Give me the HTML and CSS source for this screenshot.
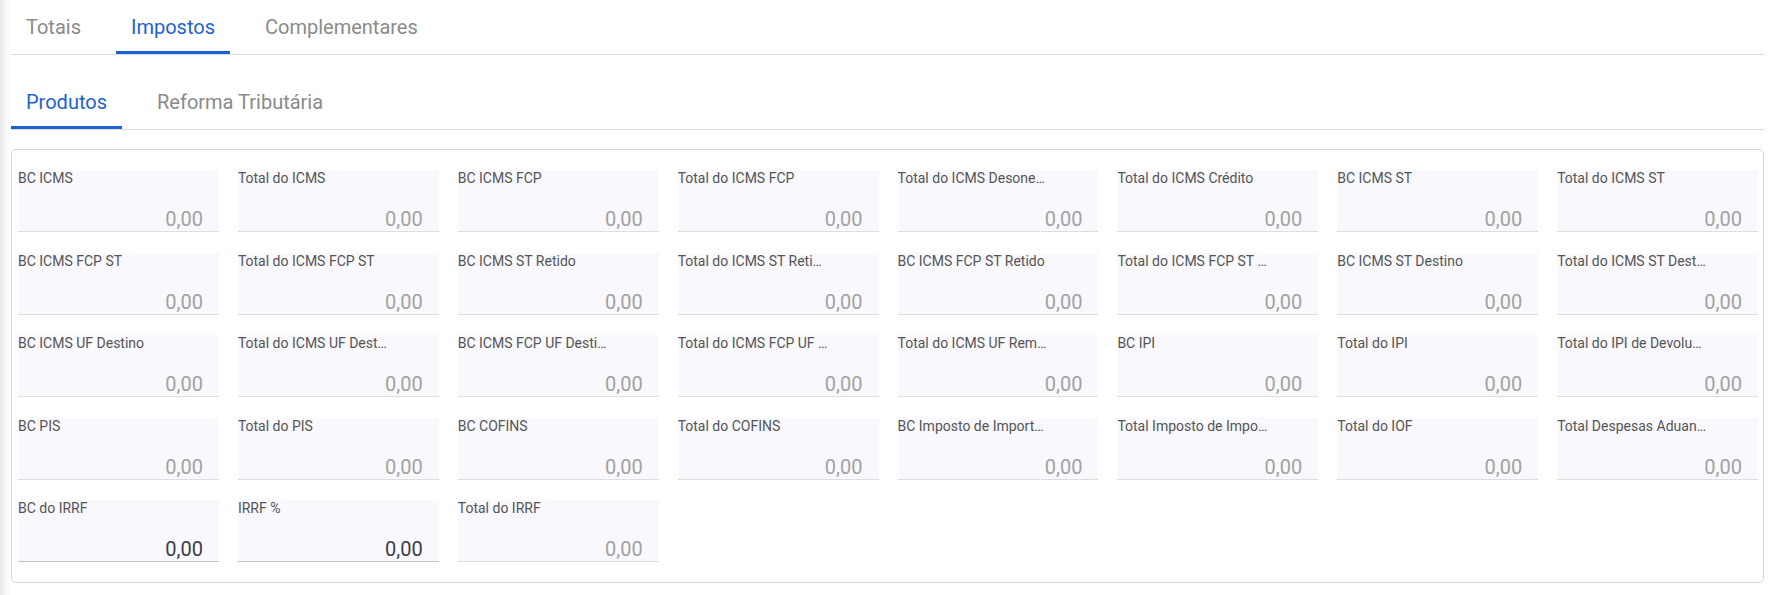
FILE: index.html
```html
<!DOCTYPE html>
<html lang="pt-BR">
<head>
<meta charset="utf-8">
<title>Impostos</title>
<link rel="stylesheet" href="styles.css">
</head>
<body>
<div class="page">
  <nav class="tabs">
    <div class="tab">Totais</div>
    <div class="tab active">Impostos</div>
    <div class="tab">Complementares</div>
  </nav>
  <nav class="tabs sub">
    <div class="tab active">Produtos</div>
    <div class="tab">Reforma Tributária</div>
  </nav>
  <section class="card">
    <div class="grid">
      <div class="field"><div class="label">BC ICMS</div><div class="value">0,00</div></div>
      <div class="field"><div class="label">Total do ICMS</div><div class="value">0,00</div></div>
      <div class="field"><div class="label">BC ICMS FCP</div><div class="value">0,00</div></div>
      <div class="field"><div class="label">Total do ICMS FCP</div><div class="value">0,00</div></div>
      <div class="field"><div class="label">Total do ICMS Desonerado</div><div class="value">0,00</div></div>
      <div class="field"><div class="label">Total do ICMS Crédito</div><div class="value">0,00</div></div>
      <div class="field"><div class="label">BC ICMS ST</div><div class="value">0,00</div></div>
      <div class="field"><div class="label">Total do ICMS ST</div><div class="value">0,00</div></div>

      <div class="field"><div class="label">BC ICMS FCP ST</div><div class="value">0,00</div></div>
      <div class="field"><div class="label">Total do ICMS FCP ST</div><div class="value">0,00</div></div>
      <div class="field"><div class="label">BC ICMS ST Retido</div><div class="value">0,00</div></div>
      <div class="field"><div class="label">Total do ICMS ST Retido</div><div class="value">0,00</div></div>
      <div class="field"><div class="label">BC ICMS FCP ST Retido</div><div class="value">0,00</div></div>
      <div class="field"><div class="label">Total do ICMS FCP ST Retido</div><div class="value">0,00</div></div>
      <div class="field"><div class="label">BC ICMS ST Destino</div><div class="value">0,00</div></div>
      <div class="field"><div class="label">Total do ICMS ST Destino</div><div class="value">0,00</div></div>

      <div class="field"><div class="label">BC ICMS UF Destino</div><div class="value">0,00</div></div>
      <div class="field"><div class="label">Total do ICMS UF Destino</div><div class="value">0,00</div></div>
      <div class="field"><div class="label">BC ICMS FCP UF Destino</div><div class="value">0,00</div></div>
      <div class="field"><div class="label">Total do ICMS FCP UF Destino</div><div class="value">0,00</div></div>
      <div class="field"><div class="label">Total do ICMS UF Remetente</div><div class="value">0,00</div></div>
      <div class="field"><div class="label">BC IPI</div><div class="value">0,00</div></div>
      <div class="field"><div class="label">Total do IPI</div><div class="value">0,00</div></div>
      <div class="field"><div class="label">Total do IPI de Devolução</div><div class="value">0,00</div></div>

      <div class="field"><div class="label">BC PIS</div><div class="value">0,00</div></div>
      <div class="field"><div class="label">Total do PIS</div><div class="value">0,00</div></div>
      <div class="field"><div class="label">BC COFINS</div><div class="value">0,00</div></div>
      <div class="field"><div class="label">Total do COFINS</div><div class="value">0,00</div></div>
      <div class="field"><div class="label">BC Imposto de Importação</div><div class="value">0,00</div></div>
      <div class="field"><div class="label">Total Imposto de Importação</div><div class="value">0,00</div></div>
      <div class="field"><div class="label">Total do IOF</div><div class="value">0,00</div></div>
      <div class="field"><div class="label">Total Despesas Aduaneiras</div><div class="value">0,00</div></div>

      <div class="field editable"><div class="label">BC do IRRF</div><div class="value">0,00</div></div>
      <div class="field editable"><div class="label">IRRF %</div><div class="value">0,00</div></div>
      <div class="field"><div class="label">Total do IRRF</div><div class="value">0,00</div></div>
    </div>
  </section>
</div>
</body>
</html>
```
FILE: styles.css
```css
html, body {
  margin: 0;
  padding: 0;
}
body {
  background: linear-gradient(to right, #e9e9e9 0, #f6f6f6 5px, #ffffff 11px) no-repeat #ffffff;
  min-height: 595px;
  font-family: Roboto, "Liberation Sans", Arial, sans-serif;
}
.page {
  padding: 0 18px 0 11px;
}
.tabs {
  display: flex;
  gap: 20px;
  border-bottom: 1px solid #dcdcdc;
  height: 54px;
}
.tabs.sub {
  margin-top: 20px;
}
.tab {
  padding: 0 15px;
  height: 54px;
  line-height: 54px;
  font-size: 20px;
  color: #8a8a8a;
  box-sizing: border-box;
  white-space: nowrap;
}
.tab.active {
  color: #1b63d4;
  border-bottom: 3px solid #1b63d4;
}
.card {
  margin-top: 19px;
  border: 1px solid #d7d7d7;
  border-radius: 5px;
  padding: 20px 5px 20px 6px;
}
.grid {
  display: grid;
  grid-template-columns: repeat(8, 1fr);
  column-gap: 19px;
  row-gap: 20.5px;
}
.field {
  height: 62px;
  box-sizing: border-box;
  background: #f8f8fd;
  border-bottom: 1px solid #dedede;
  display: flex;
  flex-direction: column;
  justify-content: space-between;
}
.label {
  font-size: 14px;
  line-height: 16px;
  color: #555555;
  max-width: 150.5px;
  white-space: nowrap;
  overflow: hidden;
  text-overflow: ellipsis;
}
.value {
  font-size: 20px;
  line-height: 24px;
  text-align: right;
  padding-right: 16px;
  color: #a2a2a2;
}
.field.editable {
  border-bottom-color: #c2c2c2;
}
.field.editable .value {
  color: #383d47;
}
```
